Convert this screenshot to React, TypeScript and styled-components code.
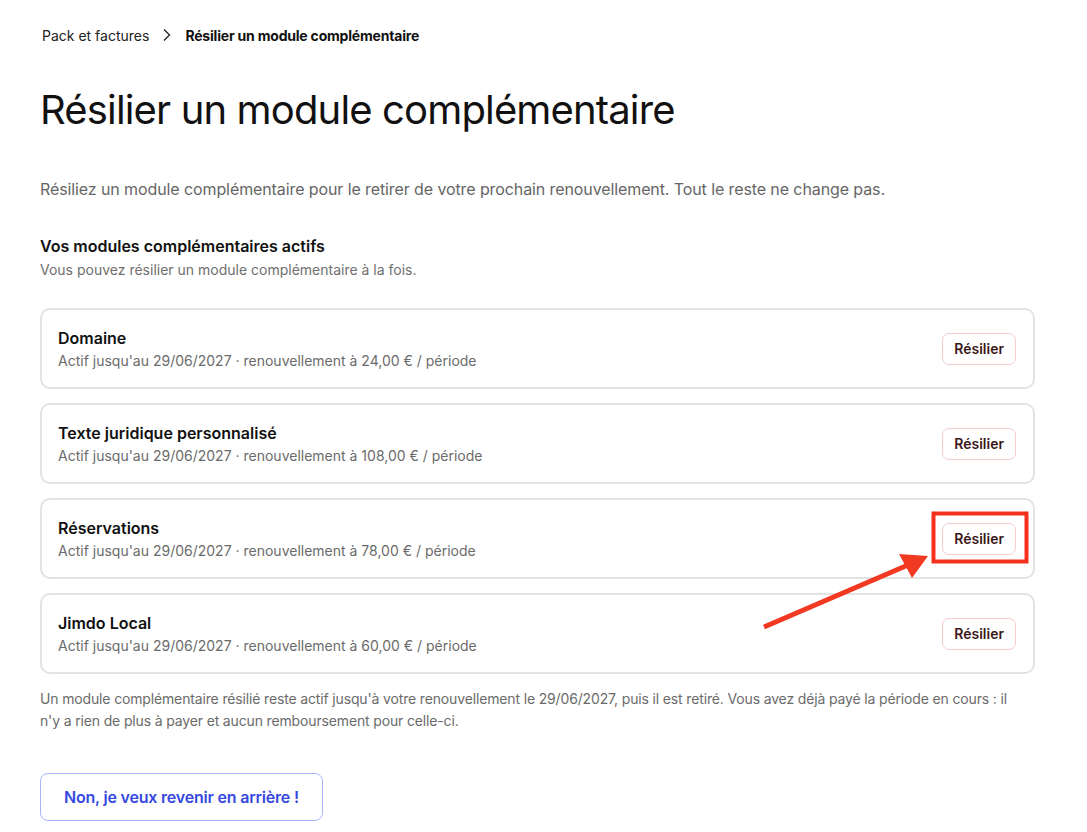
import React from 'react';
import styled, { createGlobalStyle } from 'styled-components';

interface Addon {
  name: string;
  price: string;
}

const addons: Addon[] = [
  { name: 'Domaine', price: '24,00' },
  { name: 'Texte juridique personnalisé', price: '108,00' },
  { name: 'Réservations', price: '78,00' },
  { name: 'Jimdo Local', price: '60,00' },
];

const RENEWAL_DATE = '29/06/2027';

const noteText =
  `Un module complémentaire résilié reste actif jusqu'à votre renouvellement le ${RENEWAL_DATE}, puis il est retiré. ` +
  "Vous avez déjà payé la période en cours : il n'y a rien de plus à payer et aucun remboursement pour celle-ci.";

const GlobalStyle = createGlobalStyle`
  body {
    margin: 0;
    background: #ffffff;
    font-family: 'Inter', 'Noto Sans', sans-serif;
    color: #111111;
    -webkit-font-smoothing: antialiased;
  }
`;

const App: React.FC = () => {
  return (
    <>
      <GlobalStyle />
      <Page>
        <Breadcrumb>
          <Crumb>Pack et factures</Crumb>
          <Chevron viewBox="0 0 10 14" aria-hidden>
            <path d="M2 1.5 L7.5 7 L2 12.5" fill="none" stroke="#222" strokeWidth="1.3" />
          </Chevron>
          <Crumb $current>Résilier un module complémentaire</Crumb>
        </Breadcrumb>

        <Title>Résilier un module complémentaire</Title>

        <Lead>
          Résiliez un module complémentaire pour le retirer de votre prochain renouvellement. Tout le reste ne change pas.
        </Lead>

        <SectionTitle>Vos modules complémentaires actifs</SectionTitle>
        <SectionHint>Vous pouvez résilier un module complémentaire à la fois.</SectionHint>

        <AddonList>
          {addons.map((addon) => (
            <AddonCard key={addon.name}>
              <AddonInfo>
                <AddonName>{addon.name}</AddonName>
                <AddonMeta>
                  {`Actif jusqu'au ${RENEWAL_DATE} · renouvellement à ${addon.price} € / période`}
                </AddonMeta>
              </AddonInfo>
              <CancelButton type="button">Résilier</CancelButton>
            </AddonCard>
          ))}
        </AddonList>

        <Note>{noteText}</Note>

        <BackButton type="button">Non, je veux revenir en arrière !</BackButton>

        {/* annotation: highlight box + arrow */}
        <Annotation viewBox="0 0 1087 832" aria-hidden>
          <rect x="933.5" y="513.5" width="93" height="48" fill="none" stroke="#f5301f" strokeWidth="4" />
          <line x1="764" y1="627" x2="908" y2="565" stroke="#f23a22" strokeWidth="5" />
          <polygon points="928,556 899,554 912,578" fill="#f23a22" />
        </Annotation>
      </Page>
    </>
  );
};

export default App;

const Page = styled.div`
  position: relative;
  width: 1035px;
  padding: 24px 0 10px 40px;
  min-height: 832px;
  box-sizing: border-box;
`;

const Breadcrumb = styled.nav`
  display: flex;
  align-items: center;
  gap: 12px;
  height: 22px;
  padding-left: 2px;
`;

const Crumb = styled.span<{ $current?: boolean }>`
  font-size: 14px;
  font-weight: ${(p) => (p.$current ? 700 : 400)};
  letter-spacing: ${(p) => (p.$current ? '-0.2px' : '0')};
  color: ${(p) => (p.$current ? '#111' : '#222')};
`;

const Chevron = styled.svg`
  width: 10px;
  height: 14px;
  margin: 0 1px;
`;

const Title = styled.h1`
  margin: 37px 0 0;
  font-size: 40px;
  font-weight: 400;
  line-height: 54px;
  letter-spacing: -0.85px;
  color: #111;
`;

const Lead = styled.p`
  margin: 40px 0 0;
  font-size: 16px;
  line-height: 24px;
  letter-spacing: -0.1px;
  color: #666;
`;

const SectionTitle = styled.h2`
  margin: 33px 0 0;
  font-size: 16px;
  font-weight: 600;
  line-height: 24px;
  color: #111;
`;

const SectionHint = styled.p`
  margin: 2px 0 0;
  font-size: 14px;
  line-height: 20px;
  color: #6f6f6f;
`;

const AddonList = styled.div`
  display: flex;
  flex-direction: column;
  gap: 14px;
  margin-top: 28px;
`;

const AddonCard = styled.div`
  display: flex;
  align-items: center;
  justify-content: space-between;
  height: 81px;
  box-sizing: border-box;
  padding: 0 17px 0 16px;
  border: 2px solid #e3e3e3;
  border-radius: 10px;
`;

const AddonInfo = styled.div`
  display: flex;
  flex-direction: column;
  gap: 2px;
`;

const AddonName = styled.div`
  font-size: 16px;
  font-weight: 600;
  line-height: 22px;
  color: #111;
`;

const AddonMeta = styled.div`
  font-size: 14px;
  line-height: 20px;
  color: #6b6b6b;
`;

const CancelButton = styled.button`
  height: 32px;
  padding: 0 11px;
  border: 1px solid #f6cccc;
  border-radius: 7px;
  background: #fff;
  font-family: inherit;
  font-size: 14px;
  font-weight: 600;
  color: #3b1717;
  cursor: pointer;
`;

const Note = styled.p`
  max-width: 980px;
  margin: 14px 0 0;
  font-size: 14px;
  line-height: 22px;
  letter-spacing: -0.15px;
  color: #6b6b6b;
`;

const BackButton = styled.button`
  margin-top: 41px;
  height: 48px;
  padding: 0 23px;
  border: 1px solid #aab3ff;
  border-radius: 8px;
  background: #fff;
  font-family: inherit;
  font-size: 16px;
  font-weight: 600;
  letter-spacing: -0.2px;
  color: #3548e0;
  cursor: pointer;
`;

const Annotation = styled.svg`
  position: absolute;
  left: 0;
  top: 0;
  width: 1087px;
  height: 832px;
  pointer-events: none;
`;
